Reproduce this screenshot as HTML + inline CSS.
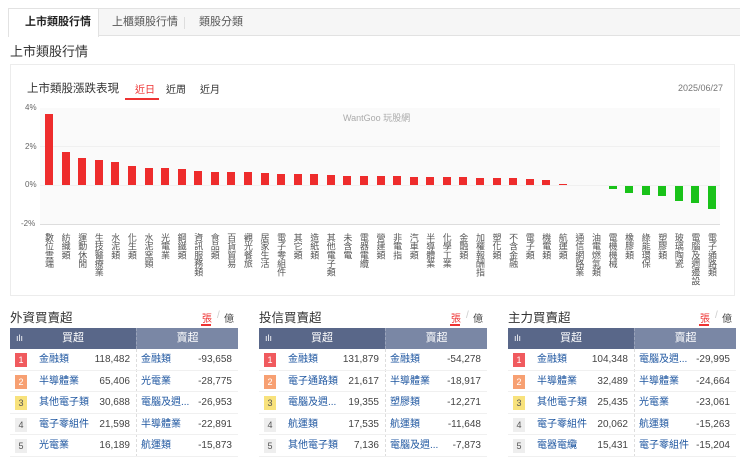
<!DOCTYPE html>
<html><head><meta charset="utf-8"><style>
*{margin:0;padding:0;box-sizing:border-box}
body{width:740px;height:461px;overflow:hidden;background:#fff;font-family:"Liberation Sans","Noto Sans CJK TC",sans-serif;color:#333;position:relative}
.a{position:absolute}
.tabs{left:8px;top:8px;width:740px;height:28px;background:#f6f6f6;border:1px solid #e2e2e2}
.tab{top:0;height:27px;line-height:27px;font-size:11px;color:#555}
.b{position:absolute;width:8px}
.r{background:#ee2c2c}
.g{background:#19c219}
.lb{position:absolute;top:233px;width:10px;writing-mode:vertical-rl;font-size:9px;line-height:10px;color:#555;letter-spacing:-0.3px}
.tt{font-size:12.5px;color:#333}
.hd{height:21px;top:328px;line-height:21px;font-size:11px;color:#fff;text-align:center}
.row{position:absolute;height:21.6px;line-height:21px;font-size:10px;border-bottom:1px solid #f0f0f0}
.rk{position:absolute;top:4px;width:12px;height:14px;line-height:14px;font-size:9px;text-align:center;color:#fff}
.nm{position:absolute;color:#1e56a0}
.nu{position:absolute;color:#444;text-align:right}
</style></head><body>
<div class="a tabs">
<div class="a" style="left:-1px;top:-1px;width:91px;height:29px;background:#fff;border:1px solid #e2e2e2;border-bottom:none"></div>
<div class="a tab" style="left:16px;font-weight:bold;color:#222">上市類股行情</div>
<div class="a tab" style="left:103px">上櫃類股行情</div>
<div class="a" style="left:175px;top:8px;width:1px;height:12px;background:#ddd"></div>
<div class="a tab" style="left:190px">類股分類</div>
</div>
<div class="a" style="left:10px;top:41px;font-size:13px;color:#333">上市類股行情</div>
<div class="a" style="left:10px;top:64px;width:725px;height:232px;border:1px solid #ececec"></div>
<div class="a" style="left:27px;top:80px;font-size:11.5px;color:#333">上市類股漲跌表現</div>
<div class="a" style="left:135px;top:81px;font-size:10px;color:#e33">近日</div>
<div class="a" style="left:125px;top:98px;width:34px;height:2px;background:#e33"></div>
<div class="a" style="left:166px;top:81px;font-size:10px;color:#333">近周</div>
<div class="a" style="left:200px;top:81px;font-size:10px;color:#333">近月</div>
<div class="a" style="left:678px;top:83px;font-size:9px;color:#777">2025/06/27</div>
<div class="a" style="left:40px;top:108px;width:680px;height:116px;background:#fafafa"></div>
<div class="a" style="left:40px;top:146px;width:680px;height:1px;background:#f0f0f0"></div>
<div class="a" style="left:40px;top:185px;width:680px;height:1px;background:#f0f0f0"></div>
<div class="a" style="left:40px;top:224px;width:680px;height:1px;background:#ddd"></div>
<div class="a" style="left:25px;top:103px;font-size:8px;color:#666">4%</div>
<div class="a" style="left:25px;top:142px;font-size:8px;color:#666">2%</div>
<div class="a" style="left:25px;top:180px;font-size:8px;color:#666">0%</div>
<div class="a" style="left:21px;top:219px;font-size:8px;color:#666">-2%</div>
<div class="a" style="left:343px;top:111px;font-size:9px;color:#aaa">WantGoo 玩股網</div>
<!-- bars -->
<div class="b r" style="left:45px;top:114.3px;height:70.7px"></div>
<div class="b r" style="left:61.6px;top:152px;height:33px"></div>
<div class="b r" style="left:78.2px;top:158.3px;height:26.7px"></div>
<div class="b r" style="left:94.7px;top:160.3px;height:24.7px"></div>
<div class="b r" style="left:111.3px;top:161.7px;height:23.3px"></div>
<div class="b r" style="left:127.9px;top:166.3px;height:18.7px"></div>
<div class="b r" style="left:144.5px;top:167.7px;height:17.3px"></div>
<div class="b r" style="left:161px;top:168.3px;height:16.7px"></div>
<div class="b r" style="left:177.6px;top:169px;height:16px"></div>
<div class="b r" style="left:194.2px;top:171px;height:14px"></div>
<div class="b r" style="left:210.8px;top:171.7px;height:13.3px"></div>
<div class="b r" style="left:227.3px;top:172px;height:13px"></div>
<div class="b r" style="left:243.9px;top:172px;height:13px"></div>
<div class="b r" style="left:260.5px;top:173px;height:12px"></div>
<div class="b r" style="left:277.1px;top:173.7px;height:11.3px"></div>
<div class="b r" style="left:293.6px;top:174.3px;height:10.7px"></div>
<div class="b r" style="left:310.2px;top:174.3px;height:10.7px"></div>
<div class="b r" style="left:326.8px;top:175px;height:10px"></div>
<div class="b r" style="left:343.4px;top:175.7px;height:9.3px"></div>
<div class="b r" style="left:359.9px;top:176.3px;height:8.7px"></div>
<div class="b r" style="left:376.5px;top:176px;height:9px"></div>
<div class="b r" style="left:393.1px;top:176px;height:9px"></div>
<div class="b r" style="left:409.7px;top:176.5px;height:8.5px"></div>
<div class="b r" style="left:426.2px;top:176.5px;height:8.5px"></div>
<div class="b r" style="left:442.8px;top:177px;height:8px"></div>
<div class="b r" style="left:459.4px;top:177px;height:8px"></div>
<div class="b r" style="left:476px;top:178.3px;height:6.7px"></div>
<div class="b r" style="left:492.5px;top:178.3px;height:6.7px"></div>
<div class="b r" style="left:509.1px;top:178.3px;height:6.7px"></div>
<div class="b r" style="left:525.7px;top:179.3px;height:5.7px"></div>
<div class="b r" style="left:542.3px;top:180px;height:5px"></div>
<div class="b r" style="left:558.8px;top:183.5px;height:1.5px"></div>
<div class="b g" style="left:608.6px;top:186px;height:3px"></div>
<div class="b g" style="left:625.1px;top:186px;height:6.5px"></div>
<div class="b g" style="left:641.7px;top:186px;height:9px"></div>
<div class="b g" style="left:658.3px;top:186px;height:10px"></div>
<div class="b g" style="left:674.9px;top:186px;height:15px"></div>
<div class="b g" style="left:691.4px;top:186px;height:16.5px"></div>
<div class="b g" style="left:708px;top:186px;height:23px"></div>
<!-- labels -->
<div class="lb" style="left:44px">數位雲端</div>
<div class="lb" style="left:60.6px">紡織類</div>
<div class="lb" style="left:77.2px">運動休閒</div>
<div class="lb" style="left:93.7px">生技醫療業</div>
<div class="lb" style="left:110.3px">水泥類</div>
<div class="lb" style="left:126.9px">化生類</div>
<div class="lb" style="left:143.5px">水泥窯類</div>
<div class="lb" style="left:160px">光電業</div>
<div class="lb" style="left:176.6px">鋼鐵類</div>
<div class="lb" style="left:193.2px">資訊服務類</div>
<div class="lb" style="left:209.8px">食品類</div>
<div class="lb" style="left:226.3px">百貨貿易</div>
<div class="lb" style="left:242.9px">觀光餐旅</div>
<div class="lb" style="left:259.5px">居家生活</div>
<div class="lb" style="left:276.1px">電子零組件</div>
<div class="lb" style="left:292.6px">其它類</div>
<div class="lb" style="left:309.2px">造紙類</div>
<div class="lb" style="left:325.8px">其他電子類</div>
<div class="lb" style="left:342.4px">未含電</div>
<div class="lb" style="left:358.9px">電器電纜</div>
<div class="lb" style="left:375.5px">營建類</div>
<div class="lb" style="left:392.1px">非電指</div>
<div class="lb" style="left:408.7px">汽車類</div>
<div class="lb" style="left:425.2px">半導體業</div>
<div class="lb" style="left:441.8px">化學工業</div>
<div class="lb" style="left:458.4px">金融類</div>
<div class="lb" style="left:475px">加權報酬指</div>
<div class="lb" style="left:491.5px">塑化類</div>
<div class="lb" style="left:508.1px">不含金融</div>
<div class="lb" style="left:524.7px">電子類</div>
<div class="lb" style="left:541.3px">機電類</div>
<div class="lb" style="left:557.8px">航運類</div>
<div class="lb" style="left:574.4px">通信網路業</div>
<div class="lb" style="left:591px">油電燃氣類</div>
<div class="lb" style="left:607.6px">電機機械</div>
<div class="lb" style="left:624.1px">橡膠類</div>
<div class="lb" style="left:640.7px">綠能環保</div>
<div class="lb" style="left:657.3px">塑膠類</div>
<div class="lb" style="left:673.9px">玻璃陶瓷</div>
<div class="lb" style="left:690.4px">電腦及週邊設</div>
<div class="lb" style="left:707px">電子通路類</div>

<!-- tables -->
<div class="a tt" style="left:10px;top:307px">外資買賣超</div>
<div class="a tt" style="left:259px;top:307px">投信買賣超</div>
<div class="a tt" style="left:508px;top:307px">主力買賣超</div>
<div class="a" style="left:202px;top:310px;font-size:10px;color:#e33">張</div><div class="a" style="left:217px;top:310px;font-size:10px;color:#ccc">/</div><div class="a" style="left:224px;top:310px;font-size:10px;color:#444">億</div>
<div class="a" style="left:201px;top:324px;width:10px;height:1.5px;background:#e33"></div>
<div class="a" style="left:451px;top:310px;font-size:10px;color:#e33">張</div><div class="a" style="left:466px;top:310px;font-size:10px;color:#ccc">/</div><div class="a" style="left:473px;top:310px;font-size:10px;color:#444">億</div>
<div class="a" style="left:450px;top:324px;width:10px;height:1.5px;background:#e33"></div>
<div class="a" style="left:700px;top:310px;font-size:10px;color:#e33">張</div><div class="a" style="left:715px;top:310px;font-size:10px;color:#ccc">/</div><div class="a" style="left:722px;top:310px;font-size:10px;color:#444">億</div>
<div class="a" style="left:699px;top:324px;width:10px;height:1.5px;background:#e33"></div>

<div class="a hd" style="left:10px;width:126px;background:#596789"><span style="position:absolute;left:6px;font-size:9px">ılı</span>買超</div>
<div class="a hd" style="left:136px;width:102px;background:#7a87a5;border-left:1px dashed #9aa3ba">賣超</div>
<div class="a hd" style="left:259px;width:126px;background:#596789"><span style="position:absolute;left:6px;font-size:9px">ılı</span>買超</div>
<div class="a hd" style="left:385px;width:102px;background:#7a87a5;border-left:1px dashed #9aa3ba">賣超</div>
<div class="a hd" style="left:508px;width:126px;background:#596789"><span style="position:absolute;left:6px;font-size:9px">ılı</span>買超</div>
<div class="a hd" style="left:634px;width:102px;background:#7a87a5;border-left:1px dashed #9aa3ba">賣超</div>

<div class="a" style="left:136px;top:349px;height:108px;border-left:1px dashed #ddd"></div>
<div class="a" style="left:385px;top:349px;height:108px;border-left:1px dashed #ddd"></div>
<div class="a" style="left:634px;top:349px;height:108px;border-left:1px dashed #ddd"></div>

<!-- T1 -->
<div class="row" style="left:10px;top:349px;width:228px"><div class="rk" style="left:5px;background:#f05a5e">1</div><div class="nm" style="left:29px">金融類</div><div class="nu" style="right:108px">118,482</div><div class="nm" style="left:131px">金融類</div><div class="nu" style="right:6px">-93,658</div></div>
<div class="row" style="left:10px;top:370.6px;width:228px"><div class="rk" style="left:5px;background:#f7a072">2</div><div class="nm" style="left:29px">半導體業</div><div class="nu" style="right:108px">65,406</div><div class="nm" style="left:131px">光電業</div><div class="nu" style="right:6px">-28,775</div></div>
<div class="row" style="left:10px;top:392.2px;width:228px"><div class="rk" style="left:5px;background:#f8e27c;color:#555">3</div><div class="nm" style="left:29px">其他電子類</div><div class="nu" style="right:108px">30,688</div><div class="nm" style="left:131px">電腦及週...</div><div class="nu" style="right:6px">-26,953</div></div>
<div class="row" style="left:10px;top:413.8px;width:228px"><div class="rk" style="left:5px;background:#eee;color:#555">4</div><div class="nm" style="left:29px">電子零組件</div><div class="nu" style="right:108px">21,598</div><div class="nm" style="left:131px">半導體業</div><div class="nu" style="right:6px">-22,891</div></div>
<div class="row" style="left:10px;top:435.4px;width:228px"><div class="rk" style="left:5px;background:#eee;color:#555">5</div><div class="nm" style="left:29px">光電業</div><div class="nu" style="right:108px">16,189</div><div class="nm" style="left:131px">航運類</div><div class="nu" style="right:6px">-15,873</div></div>
<!-- T2 -->
<div class="row" style="left:259px;top:349px;width:228px"><div class="rk" style="left:5px;background:#f05a5e">1</div><div class="nm" style="left:29px">金融類</div><div class="nu" style="right:108px">131,879</div><div class="nm" style="left:131px">金融類</div><div class="nu" style="right:6px">-54,278</div></div>
<div class="row" style="left:259px;top:370.6px;width:228px"><div class="rk" style="left:5px;background:#f7a072">2</div><div class="nm" style="left:29px">電子通路類</div><div class="nu" style="right:108px">21,617</div><div class="nm" style="left:131px">半導體業</div><div class="nu" style="right:6px">-18,917</div></div>
<div class="row" style="left:259px;top:392.2px;width:228px"><div class="rk" style="left:5px;background:#f8e27c;color:#555">3</div><div class="nm" style="left:29px">電腦及週...</div><div class="nu" style="right:108px">19,355</div><div class="nm" style="left:131px">塑膠類</div><div class="nu" style="right:6px">-12,271</div></div>
<div class="row" style="left:259px;top:413.8px;width:228px"><div class="rk" style="left:5px;background:#eee;color:#555">4</div><div class="nm" style="left:29px">航運類</div><div class="nu" style="right:108px">17,535</div><div class="nm" style="left:131px">航運類</div><div class="nu" style="right:6px">-11,648</div></div>
<div class="row" style="left:259px;top:435.4px;width:228px"><div class="rk" style="left:5px;background:#eee;color:#555">5</div><div class="nm" style="left:29px">其他電子類</div><div class="nu" style="right:108px">7,136</div><div class="nm" style="left:131px">電腦及週...</div><div class="nu" style="right:6px">-7,873</div></div>
<!-- T3 -->
<div class="row" style="left:508px;top:349px;width:228px"><div class="rk" style="left:5px;background:#f05a5e">1</div><div class="nm" style="left:29px">金融類</div><div class="nu" style="right:108px">104,348</div><div class="nm" style="left:131px">電腦及週...</div><div class="nu" style="right:6px">-29,995</div></div>
<div class="row" style="left:508px;top:370.6px;width:228px"><div class="rk" style="left:5px;background:#f7a072">2</div><div class="nm" style="left:29px">半導體業</div><div class="nu" style="right:108px">32,489</div><div class="nm" style="left:131px">半導體業</div><div class="nu" style="right:6px">-24,664</div></div>
<div class="row" style="left:508px;top:392.2px;width:228px"><div class="rk" style="left:5px;background:#f8e27c;color:#555">3</div><div class="nm" style="left:29px">其他電子類</div><div class="nu" style="right:108px">25,435</div><div class="nm" style="left:131px">光電業</div><div class="nu" style="right:6px">-23,061</div></div>
<div class="row" style="left:508px;top:413.8px;width:228px"><div class="rk" style="left:5px;background:#eee;color:#555">4</div><div class="nm" style="left:29px">電子零組件</div><div class="nu" style="right:108px">20,062</div><div class="nm" style="left:131px">航運類</div><div class="nu" style="right:6px">-15,263</div></div>
<div class="row" style="left:508px;top:435.4px;width:228px"><div class="rk" style="left:5px;background:#eee;color:#555">5</div><div class="nm" style="left:29px">電器電纜</div><div class="nu" style="right:108px">15,431</div><div class="nm" style="left:131px">電子零組件</div><div class="nu" style="right:6px">-15,204</div></div>
</body></html>
